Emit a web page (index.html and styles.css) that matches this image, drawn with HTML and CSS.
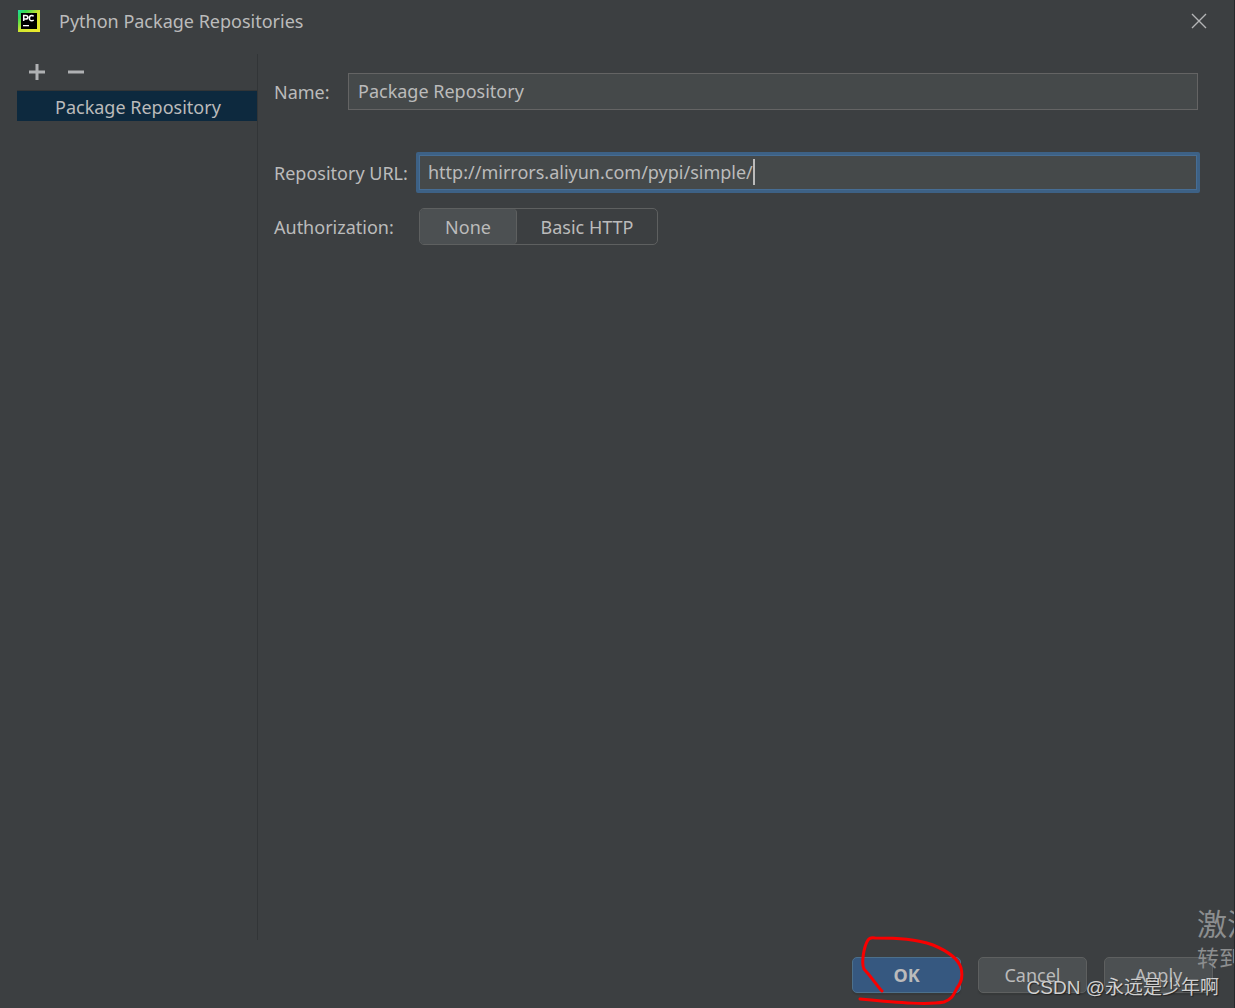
FILE: index.html
```html
<!DOCTYPE html>
<html lang="en">
<head>
<meta charset="utf-8">
<title>Python Package Repositories</title>
<link rel="stylesheet" href="styles.css">
</head>
<body>
<div class="dialog">
  <header class="titlebar">
    <svg class="logo" viewBox="0 0 22 22" aria-hidden="true">
      <defs>
        <linearGradient id="frame" x1="0" y1="0" x2="1" y2="1">
          <stop offset="0" stop-color="#21d7a9"/>
          <stop offset="0.2" stop-color="#35dc52"/>
          <stop offset="0.5" stop-color="#d0e630"/>
          <stop offset="1" stop-color="#f0ea2c"/>
        </linearGradient>
      </defs>
      <rect width="22" height="22" fill="url(#frame)"/>
      <rect x="3" y="3" width="16" height="16" fill="#000"/>
      <path d="M5.7 11V5.5H7.8Q9.8 5.5 9.8 7.3T7.8 9.1H5.7M15.7 6.3Q14.8 5.4 13.7 5.4Q11.4 5.4 11.4 8.1T13.7 10.8Q14.8 10.8 15.7 10" fill="none" stroke="#fff" stroke-width="1.5"/>
      <rect x="5" y="15" width="6" height="1.3" fill="#fff"/>
    </svg>
    <h1 class="title">Python Package Repositories</h1>
    <button class="close" type="button" aria-label="Close">
      <svg viewBox="0 0 16 16" width="16" height="16"><path d="M1 1L15 15M15 1L1 15" stroke="#b4b5b6" stroke-width="1.4"/></svg>
    </button>
  </header>

  <main class="content">
    <aside class="sidebar">
      <div class="toolbar">
        <button class="tool" type="button" aria-label="Add"><svg viewBox="0 0 16 16" width="16" height="16"><path d="M8 0V16M0 8H16" stroke="#afb1b3" stroke-width="3"/></svg></button>
        <button class="tool" type="button" aria-label="Remove"><svg viewBox="0 0 16 16" width="16" height="16"><path d="M0 8H16" stroke="#afb1b3" stroke-width="3"/></svg></button>
      </div>
      <ul class="repos">
        <li class="repo selected">Package Repository</li>
      </ul>
    </aside>

    <form class="form" id="repo-form">
      <div class="row name-row">
        <label class="name-label" for="name">Name:</label>
        <input class="field" id="name" type="text" value="Package Repository">
      </div>
      <div class="row">
        <label class="label" for="url">Repository URL:</label>
        <div class="focus-ring">
          <input class="field" id="url" type="text" value="http://mirrors.aliyun.com/pypi/simple/">
          <span class="caret"></span>
        </div>
      </div>
      <div class="row auth-row">
        <span class="label" id="auth">Authorization:</span>
        <div class="segments" role="group" aria-labelledby="auth">
          <button class="segment active" type="button" aria-pressed="true">None</button>
          <button class="segment basic" type="button" aria-pressed="false">Basic HTTP</button>
        </div>
      </div>
    </form>
  </main>

  <footer class="actions">
    <button class="action primary" type="submit" form="repo-form">OK</button>
    <button class="action" type="button">Cancel</button>
    <button class="action" type="button">Apply</button>
  </footer>

  <div class="activation"><div class="activation-title">激活</div><div>转到</div></div>
  <svg class="scribble" viewBox="0 0 110 72" aria-hidden="true">
    <path d="M28 55C23 50 20 44 10 33C7 27 10 10 14 4Q16 1 21 2C45 2 62 3 79 9C91 14 104 22 107 32C109 40 108 46 103 52C99 60 98 63 90 66C74 69 48 67 6 63" fill="none" stroke="#f90000" stroke-width="3" stroke-linecap="round" stroke-linejoin="round"/>
  </svg>
  <div class="watermark">CSDN @永远是少年啊</div>
</div>
</body>
</html>
```

FILE: styles.css
```css
* { box-sizing: border-box; }

body {
  margin: 0;
  background: #3c3f41;
  color: #bbbbbb;
  font: 18px/24px "Noto Sans", "Noto Sans CJK SC", sans-serif;
}

button, input { font: inherit; color: inherit; margin: 0; }

.dialog {
  position: relative;
  display: flex;
  flex-direction: column;
  min-height: 100vh;
  overflow: hidden;
  border-right: 1px solid #25282b;
}

.titlebar {
  display: flex;
  align-items: center;
  height: 42px;
  padding: 0 24px 0 18px;
}
.logo { width: 22px; height: 22px; margin-right: 19px; }
.title { flex: 1; margin: 0; font-size: 18px; font-weight: 400; }
.close, .tool {
  display: flex;
  padding: 3px;
  border: 0;
  background: none;
}

.content {
  flex: 1;
  display: flex;
  padding: 12px 36px 0 17px;
}

.sidebar { width: 241px; border-right: 1px solid #323537; }
.toolbar {
  display: flex;
  gap: 17px;
  height: 37px;
  padding: 7px 9px;
  border-bottom: 1px solid #323537;
}
.repos { list-style: none; margin: 0; padding: 0; }
.repo { padding: 4px 0 2px 38px; }
.repo.selected { background: #0d293e; }

.form { flex: 1; padding: 19px 0 0 16px; }
.row { display: flex; align-items: center; }
.name-row { margin-bottom: 42px; }
.name-label { width: 74px; }
.label { width: 142px; white-space: nowrap; }
.field {
  flex: 1;
  min-width: 0;
  width: 100%;
  height: 37px;
  padding: 0 9px 2px;
  border: 1px solid #646464;
  background: #45494a;
  outline: none;
}
.focus-ring {
  position: relative;
  flex: 1;
  display: flex;
  margin-right: -2px;
  border: 3px solid #3d6185;
  border-radius: 2px;
}
.focus-ring .field { height: 35px; padding: 0 8px 2px; border-color: #466d94; }
.caret {
  position: absolute;
  left: 334px;
  top: 4px;
  width: 2px;
  height: 26px;
  background: #bbbbbb;
}

.auth-row { margin-top: 15px; }
.segments {
  display: flex;
  margin-left: 3px;
  border: 1px solid #5e6060;
  border-radius: 5px;
}
.segment {
  height: 35px;
  padding: 0;
  border: 0;
  background: none;
}
.segment.active {
  width: 97px;
  border-right: 1px solid #5e6060;
  border-radius: 4px;
  background: #4c5052;
}
.segment.basic { width: 140px; }

.actions {
  display: flex;
  justify-content: flex-end;
  gap: 17px;
  padding: 17px 21px 15px;
}
.action {
  width: 109px;
  height: 36px;
  padding: 0;
  border: 1px solid #5e6060;
  border-radius: 5px;
  background: #4c5052;
  box-shadow: 0 2px 1px #36393a;
}
.action.primary { border-color: #4c708c; background: #365880; font-weight: 700; }

.activation {
  position: absolute;
  right: -25px;
  bottom: 36px;
  width: 62px;
  overflow: hidden;
  white-space: nowrap;
  color: #8c8e8f;
  font: 22px/32px "Noto Sans CJK SC", sans-serif;
}
.activation-title { font-size: 30px; line-height: 36px; }
.scribble {
  position: absolute;
  right: 270px;
  bottom: 0;
  width: 110px;
  height: 72px;
}
.watermark {
  position: absolute;
  right: 15px;
  bottom: 6px;
  color: #d0d0d0;
  font: 19px/28px "Liberation Sans", "Noto Sans CJK SC", sans-serif;
  text-shadow: 1px 1px 1px #222222;
}
```
